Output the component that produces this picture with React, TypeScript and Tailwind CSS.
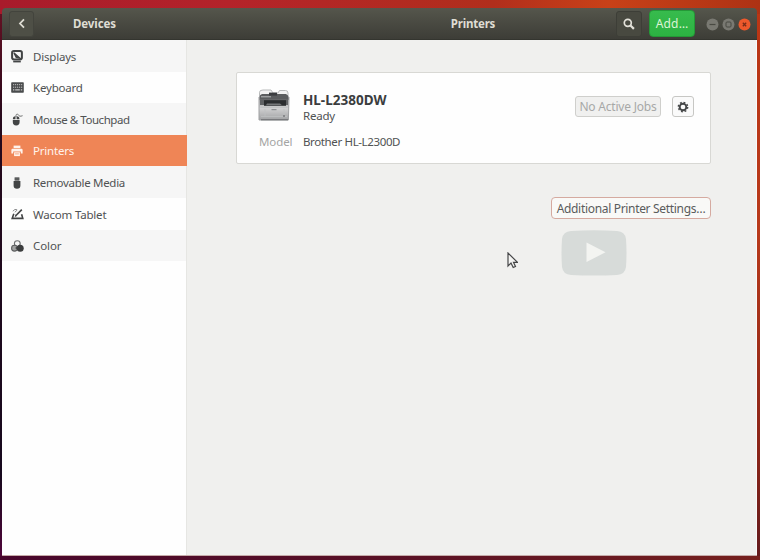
import type { ReactNode } from "react";

const ink = "#424445";

function DisplayIcon() {
  return (
    <svg width="12" height="13" viewBox="0 0 12 13" fill="none">
      <rect x="1.1" y="1" width="9.8" height="8.4" rx="1.8" stroke={ink} strokeWidth="2" />
      <path d="M2.8 2.8 9 8.2 5.2 7.4Z" fill={ink} stroke={ink} strokeWidth="1.2" />
      <path d="M2.2 11.6h7.6" stroke={ink} strokeWidth="1.6" />
    </svg>
  );
}

function KeyboardIcon() {
  return (
    <svg width="13" height="11" viewBox="0 0 13 11" fill="none">
      <rect x=".2" y=".3" width="12.6" height="10.4" rx=".8" fill="#4a4c4d" />
      <path d="M2 2.7h9.3M2 5.2h9.3" stroke="#c6c6c6" strokeWidth="1" strokeDasharray="1.2 .8" />
      <path d="M2 7.9h1.3M4.2 7.9h4.6M9.8 7.9h1.4" stroke="#e6e6e6" strokeWidth="1" />
    </svg>
  );
}

function MouseIcon() {
  return (
    <svg width="13" height="13" viewBox="0 0 13 13" fill="none">
      <path d="M1.8 7h6.8v2a3.4 3.4 0 0 1-6.8 0Z" fill={ink} />
      <path d="M1.9 6.2a2.8 2.8 0 0 1 2.6-3v3Zm3.7-3a2.8 2.8 0 0 1 2.8 3H5.6Z" fill={ink} />
      <path d="M5 4V2.5C5 .8 6.9.7 7.4 1.8c.6 1.4 1.7 1.9 4.2.9" stroke="#737575" strokeWidth="1" />
    </svg>
  );
}

function PrinterIcon() {
  return (
    <svg width="12" height="12" viewBox="0 0 12 12" fill="#fff3ec">
      <path d="M2.6.6h6.8v2.5H2.6Z" />
      <path d="M1.5 3.7h9q1.1 0 1.1 1.2v3.5H9.8V6.5H2.2v1.9H.4V4.9q0-1.2 1.1-1.2Z" />
      <path d="M3.1 7.3h5.8v3.8H3.1Z" />
      <path d="M4.1 8.9h3.8" stroke="#ef8556" strokeWidth=".7" />
    </svg>
  );
}

function UsbIcon() {
  return (
    <svg width="8" height="12" viewBox="0 0 8 12" fill={ink}>
      <path d="M1.6.4h4.8v3.2H1.6Z" />
      <path d="M.6 4h6.8v4.6Q7.4 11.8 4 11.8T.6 8.6Z" />
      <path d="M3 1.5v1M5 1.5v1" stroke="#ccc" strokeWidth=".7" />
    </svg>
  );
}

function TabletIcon() {
  return (
    <svg width="13" height="12" viewBox="0 0 13 12" fill="none" stroke={ink}>
      <path d="M2.8 5.8 1.2 10.4h10.6L10.6 6.2" strokeWidth="1.6" />
      <path d="m10.8 1.6-5.6 5.6" strokeWidth="1.6" />
      <path d="m4.2 8.5.5-1.7 1 1Z" fill={ink} strokeWidth=".8" />
      <path d="M1.8 3.2q2.2-2.6 4-1.6.8.8-2 2.6" stroke="#7c7e7f" strokeWidth=".9" />
    </svg>
  );
}

function ColorIcon() {
  return (
    <svg width="13" height="12" viewBox="0 0 13 12" fill="none">
      <circle cx="6.3" cy="3.6" r="2.9" stroke="#6c6e6f" strokeWidth="1.1" />
      <circle cx="3.5" cy="8.2" r="2.9" fill="#a0a1a1" stroke="#5c5e5f" strokeWidth="1.1" />
      <circle cx="9.2" cy="8.2" r="3.5" fill="#3b3d3e" />
      <circle cx="5.4" cy="8" r=".9" fill="#464748" />
    </svg>
  );
}

type Item = { label: string; icon: ReactNode; text: string };

const items: Item[] = [
  { label: "Displays", icon: <DisplayIcon />, text: "tracking-[-0.2px]" },
  { label: "Keyboard", icon: <KeyboardIcon />, text: "tracking-[-0.2px]" },
  { label: "Mouse & Touchpad", icon: <MouseIcon />, text: "tracking-[-0.45px]" },
  { label: "Printers", icon: <PrinterIcon />, text: "tracking-[-0.2px]" },
  { label: "Removable Media", icon: <UsbIcon />, text: "tracking-[-0.29px]" },
  { label: "Wacom Tablet", icon: <TabletIcon />, text: "tracking-[-0.2px]" },
  { label: "Color", icon: <ColorIcon />, text: "tracking-[-0.1px]" },
];

function DeviceImage() {
  return (
    <svg className="shrink-0" width="34" height="34" viewBox="0 0 34 34" fill="none">
      <defs>
        <linearGradient id="body" x1="0" y1="0" x2="0" y2="1">
          <stop stopColor="#a1a1a2" />
          <stop offset=".5" stopColor="#cfcfd0" />
          <stop offset="1" stopColor="#a1a2a4" />
        </linearGradient>
      </defs>
      <path d="M2.5 9V4.2Q2.5 2 6 2h8l2 3h5l1.5-2.5h6Q31 2.5 31 5v4" fill="#f2f2f2" stroke="#b8babb" />
      <path d="M2 9h30l-.6 23H2Z" fill="url(#body)" stroke="#a0a1a3" />
      <path d="M3 7.3 5 6h24l2 1.5.6 4.2H2.6Z" fill="#5b5d5f" />
      <path d="M12 4.6h8v3h-8Z" fill="#3b3d40" />
      <path d="M4 8.8h10" stroke="#b9bbbc" />
      <path d="M3 11.4h28v5.6H3Z" fill="#606264" />
      <path d="M7 12.2h22v5.6H7Z" fill="#2b2d2f" />
      <path d="M10 15.6h13l2 1.6H9Z" fill="#747678" />
      <path d="M3.5 19.5h27M4 28.5h26M8 21v7M27 21v7" stroke="#bec0c1" strokeWidth=".8" />
      <path d="M14.5 21.7h5" stroke="#818386" />
      <path d="M4 31.8h27" stroke="#67696b" />
      <path d="M26 28h2" stroke="#77797b" strokeWidth="1.5" />
    </svg>
  );
}

function Sidebar() {
  return (
    <nav className="w-[185px] shrink-0 border-r border-[#e6e6e3] bg-[#fefefe]">
      {items.map((item, i) => (
        <div
          key={item.label}
          className={`flex h-[31.6px] items-center pt-px ${
            i === 3 ? "-mr-px bg-[#ef8556] text-[#fff3ec]" : i % 2 === 0 ? "bg-[#f6f6f6] text-[#505253]" : "text-[#505253]"
          }`}
        >
          <span className="ml-[8px] flex w-[14px] justify-center">{item.icon}</span>
          <span className={`ml-[9px] whitespace-nowrap text-[11.5px] ${item.text}`}>{item.label}</span>
        </div>
      ))}
    </nav>
  );
}

function Header() {
  return (
    <header className="flex h-[32px] shrink-0 items-center rounded-t-[4px] border-b border-[#34352f] bg-linear-to-b from-[#55564c] to-[#3d3d37] text-[#dfddd4]">
      <div className="flex w-[185px] items-center">
        <button className="ml-[7px] flex h-[26px] w-[25px] items-center justify-center rounded-[3px] border border-[#43443d] bg-[#4e4f46]">
          <svg width="8" height="11" viewBox="0 0 8 11" fill="none" stroke="#dfddd4" strokeWidth="1.8">
            <path d="M6 1.3 2 5.5l4 4.2" />
          </svg>
        </button>
        <span className="ml-[39px] pt-px text-[11.5px] font-bold tracking-[-0.1px]">Devices</span>
      </div>
      <div className="flex-1 pt-px text-center text-[11.5px] font-bold tracking-[-0.2px]">
        <span className="ml-[143px]">Printers</span>
      </div>
      <button className="flex h-[26px] w-[26px] items-center justify-center rounded-[3px] border border-[#3d3e37] bg-[#484940]">
        <svg width="12" height="12" viewBox="0 0 12 12" fill="none" stroke="#e3e1d9">
          <circle cx="4.8" cy="4.8" r="3.5" strokeWidth="1.7" />
          <path d="m7.5 7.5 3.4 3.4" strokeWidth="2.2" />
        </svg>
      </button>
      <button className="ml-[7px] flex h-[27px] w-[46px] items-center justify-center rounded-[4px] border border-[#249937] bg-linear-to-b from-[#37bb4d] to-[#2cb342] pt-px text-[12px] tracking-[0.2px] text-[#dcf4d5]">Add…</button>
      <div className="ml-[11px] mr-[6px] mt-px flex gap-[3px]">
        <svg width="13" height="13" viewBox="0 0 13 13" fill="none">
          <circle cx="6.5" cy="6.5" r="6" fill="#797972" />
          <path d="M3.5 6.5h6" stroke="#494a43" strokeWidth="1.2" />
        </svg>
        <svg width="13" height="13" viewBox="0 0 13 13" fill="none">
          <circle cx="6.5" cy="6.5" r="6" fill="#797972" />
          <rect x="4" y="4" width="5" height="5" rx="1" stroke="#494a43" />
        </svg>
        <svg width="13" height="13" viewBox="0 0 13 13" fill="none">
          <circle cx="6.5" cy="6.5" r="6" fill="#ed592c" />
          <path d="m4.8 4.8 3.4 3.4m0-3.4L4.8 8.2" stroke="#792d18" strokeWidth="1.3" />
        </svg>
      </div>
    </header>
  );
}

function PrinterCard() {
  return (
    <section className="h-[92px] rounded-[2px] border border-[#d8d8d4] bg-[#fefefe] pl-[20px] pr-[14px] pt-[15px] text-[#505253]">
      <div className="flex">
        <DeviceImage />
        <div className="ml-[12px] mt-[3px] w-[272px] shrink-0">
          <div className="text-[13.5px] leading-[19px] font-bold tracking-[0px] text-[#3b3d3e]">HL-L2380DW</div>
          <div className="text-[11.5px] leading-[12px] tracking-[-0.2px]">Ready</div>
        </div>
        <button className="mt-[8px] flex h-[21px] w-[86px] shrink-0 items-center justify-center rounded-[3px] border border-[#cfcfcc] bg-[#f0f0ef] text-[12px] tracking-[-0.2px] whitespace-nowrap text-[#a7a8a7]">No Active Jobs</button>
        <button className="ml-[11px] mt-[8px] flex h-[21px] w-[22px] shrink-0 items-center justify-center rounded-[3px] border border-[#c7c7c4] bg-[#fafafa]">
          <svg width="12" height="12" viewBox="0 0 12 12" fill="none" stroke="#454748">
            <circle cx="6" cy="6" r="4.7" strokeWidth="1.4" strokeDasharray="1.85 1.84" />
            <circle cx="6" cy="6" r="3.3" strokeWidth="1.9" />
          </svg>
        </button>
      </div>
      <div className="mt-[11px] flex text-[11.5px] leading-[17px]">
        <span className="ml-[2px] w-[32px] tracking-[-0.1px] whitespace-nowrap text-[#a4a5a4]">Model</span>
        <span className="ml-[12px] tracking-[-0.37px]">Brother HL-L2300D</span>
      </div>
    </section>
  );
}

export default function App() {
  return (
    <div className="relative h-[560px] w-[760px] overflow-hidden bg-[linear-gradient(90deg,#48062c,#5b1124_55%,#76201d)] pl-[2px] pt-[8px] font-['Noto_Sans',sans-serif]">
      <div className="absolute inset-x-0 top-0 h-[14px] bg-[linear-gradient(90deg,#a81b2b,#b4232a_30%,#b12e1c_65%,#c84118_80%,#ad3214)]" />
      <div className="absolute bottom-[4px] left-0 top-[14px] w-[2px] bg-[linear-gradient(#631022,#25091c_20%,#17091e_85%,#50063a)]" />
      <div className="absolute bottom-[4px] right-0 top-[14px] w-[3px] bg-[linear-gradient(#ba3514,#b83a1b_40%,#8b2518_80%,#641b1d)]" />
      <main className="relative flex h-[548px] w-[755px] flex-col">
        <Header />
        <div className="flex min-h-0 flex-1 border-b border-[#c6aba9] bg-[#f0f0ee]">
          <Sidebar />
          <div className="min-w-0 flex-1 border-r border-[#f9fafa] pl-[49px] pr-[45px] pt-[32px]">
            <div className="w-[475px]">
              <PrinterCard />
              <div className="mt-[33px] flex justify-end">
                <button className="flex h-[22px] w-[160px] items-center justify-center rounded-[4px] border border-[#d5aaa0] bg-[#f9f9f7] pt-px text-[12px] tracking-[-0.32px] whitespace-nowrap text-[#5a5c5c]">Additional Printer Settings…</button>
              </div>
            </div>
          </div>
        </div>
      </main>
      <svg className="absolute left-[561px] top-[230px]" width="66" height="46" viewBox="0 0 66 46">
        <path d="M10 1Q33-.5 56 1 64 1.5 65 9q1 14 0 28-1 7.5-9 8-23 1.2-46 0-8-.5-9-8Q0 23 1 9 2 1.5 10 1Z" fill="#d7dbd9" />
        <path d="m25.5 12.5 19 9.8-19 9.7Z" fill="#f3f4f1" />
      </svg>
      <svg className="absolute left-[507px] top-[252px]" width="11" height="17" viewBox="0 0 11 17">
        <path d="M1 1v13l3-3 2.2 4.5 2.3-1-2-4.2h4Z" fill="#f4f4f2" stroke="#454647" strokeWidth="1.2" />
      </svg>
    </div>
  );
}
